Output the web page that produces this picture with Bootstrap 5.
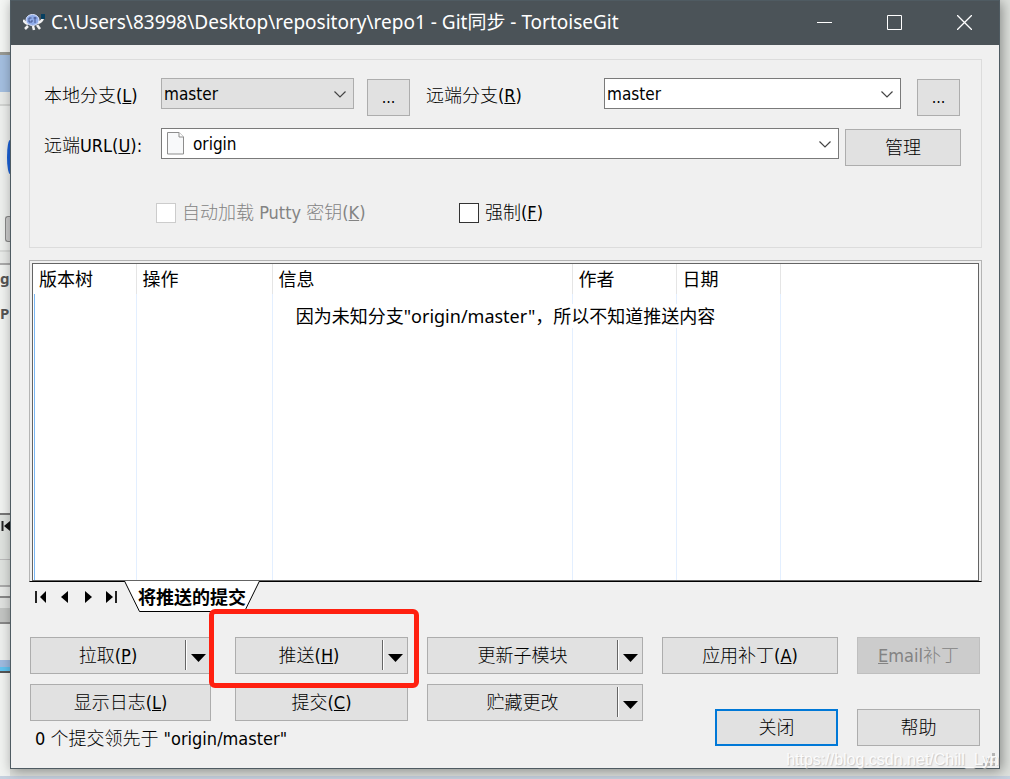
<!DOCTYPE html>
<html lang="zh-CN">
<head>
<meta charset="utf-8">
<meta name="viewport" content="width=device-width, initial-scale=1">
<title>Git同步 - TortoiseGit</title>
<link href="https://cdn.jsdelivr.net/npm/bootstrap@5.3.0/dist/css/bootstrap.min.css" rel="stylesheet">
<style>
  body { background: #dfe2de; font-family: "DejaVu Sans Condensed", "Noto Sans CJK SC", sans-serif; font-size: 17px; line-height: 24px; color: #000; }
  /* desktop and the window behind the dialog */
  .desk { padding-right: 10px; border-bottom: 3px solid #c6d1df; }
  .backdrop {
    width: 10px; font: 700 15px/20px "Noto Sans", sans-serif; color: #555; padding-top: 140px;
    background: linear-gradient(#f4f6f4 0 52px, #999a94 52px 55px, #a4bfe0 55px 92px, #e9ebe9 92px 104px, #d2d4d2 104px 106px, #eef0ee 106px 250px, #d8dad8 250px 252px, #e9ebe9 252px 263px, #aaa 263px 265px, #f1f3f1 265px 513px, #777 513px 515px, #dfe2df 515px 559px, #bbb 559px 560px, #dfe2df 560px 585px, #aaa 585px 587px, #e8eae8 587px 596px, #888 596px 598px, #e0e2e0 598px 608px, #c3c5c3 608px 622px, #888 622px 624px, #eef0ee 624px 660px, #9fbbe0 660px 667px, #62c4f0 667px 671px, #555 671px 673px, #f1f3f1 673px);
  }
  .backdrop .orb { height: 34px; border-radius: 3px 0 0 3px / 17px 0 0 17px; background: #1b62d8; width: 3px; }
  .backdrop .thumb { margin-top: 42px; height: 26px; width: 5px; border: 1px solid #888; border-right: 0; border-radius: 3px 0 0 3px; background: #ccc; }
  .backdrop .t1 { margin-top: 26px; }
  .backdrop .t2 { margin-top: 15px; }
  .backdrop .rewind { margin-top: 197px; display: block; }
  .win { border: 1px solid #4f5b62; background: #f0f0f0; box-shadow: 2px 2px 12px rgba(0,0,0,.4); margin-bottom: 7px; min-width: 0; }
  .titlebar { height: 44px; background: #4b5358; color: #fff; font: 19px/42px "Noto Sans", "Noto Sans CJK SC", sans-serif; padding-left: 12px; }
  .winbtn { width: 70px; height: 42px; background: none; border: 0; padding: 0; color: #fff; line-height: 0; }
  .content { padding: 14px 17px 0 18px; }
  .group { border: 1px solid #dcdcdc; height: 189px; padding: 18px 21px 0 14px; }
  .zh { font-weight: 300; font-size: 18px; }
  .wbtn.zh, .split .zh { font-size: 18px; font-weight: 300; }
  .lab { width: 117px; padding-top: 6px; white-space: nowrap; }
  .lab-remote { width: 178px; }
  .combo { height: 31px; border: 1px solid #7a7a7a; border-radius: 0; padding: 0 30px 0 2px; font-size: 17px; line-height: 24px; color: #000; background-color: #fff; background-position: right 6px center; background-size: 14px 14px; background-image: url("data:image/svg+xml,%3Csvg xmlns='http://www.w3.org/2000/svg' viewBox='0 0 14 14'%3E%3Cpath d='M1.5 4.5L7 10l5.500-5.500' fill='none' stroke='%23444' stroke-width='1.200'/%3E%3C/svg%3E"); }
  .combo-local { width: 193px; background-color: #e1e1e1; border-color: #adadad; }
  .combo-url { padding-left: 31px; }
  .fileicon { left: 6px; top: 4px; }
  .row-gap { margin-top: 12px; }
  .wbtn { height: 37px; border: 1px solid #adadad; border-radius: 0; background: #e1e1e1; padding: 0; color: #000; line-height: 24px; }
  .wbtn:disabled { background: #ccc; border-color: #bfbfbf; color: #838383; opacity: 1; }
  .wbtn-default { border: 2px solid #0078d7; }
  .wbtn-dots { width: 43px; margin-top: 1px; }
  .dots-local { margin-left: 13px; }
  .wbtn-manage { width: 116px; margin: 1px -1px 0 6px; }
  .check { width: 20px; height: 20px; margin: 0; border: 1px solid #333; border-radius: 0; appearance: none; background: #fff; }
  .check:disabled { border-color: #ccc; }
  .checks { padding: 35px 0 0 112px; }
  .check-auto { width: 303px; color: #838383; }
  .check-text { padding-left: 6px; }
  .listframe { margin-top: 12px; border: 1px solid #b4b4b4; border-bottom-color: #000; padding: 2px 2px 0; }
  .listview { border: 1px solid #646464; background: #fff; }
  .commits { table-layout: fixed; width: 100%; height: 316px; font: 18px/24px "Noto Sans", "Noto Sans CJK SC", sans-serif; color: #000; }
  .commits th { height: 30px; padding: 0 0 0 6px; font-weight: 400; border-right: 1px solid #e5e5e5; }
  .commits td { border-right: 1px solid #e3efff; padding: 0; }
  .commits tr > :last-child { border-right: 0; }
  .commits td:first-child { background: linear-gradient(#7ab8f5, #7ab8f5) 1px 0 / 1px 100% no-repeat; }
  .w-graph { width: 103px; }
  .w-short { width: 104px; }
  .w-action { width: 136px; }
  .w-info { width: 300px; }
  .notice { top: 40px; background: #fff; font: 18px/24px "Noto Sans", "Noto Sans CJK SC", sans-serif; white-space: nowrap; }
  .sheets { height: 55px; }
  .tabnav { padding: 6px 0 0; width: 95px; }
  .tabnav button { border: 0; background: none; padding: 0; width: 24px; height: 18px; line-height: 0; }
  .tabnav svg { overflow: visible; }
  .sheet { width: 136px; height: 30px; border: 0; padding: 0 0 0 14px; font: 700 18px/28px "Noto Sans CJK SC", sans-serif; text-align: left; white-space: nowrap; color: #000; background: none; margin-top: -1px; }
  .sheet svg { left: 0; top: 0; }
  .left-grid { display: grid; grid-template-columns: 205fr 192fr 216fr; row-gap: 10px; flex: 613 1 0; padding-left: 1px; align-content: start; }
  .cell-a { padding-right: 24px; }
  .cell-b { padding-right: 19px; }
  .right-col { flex: 318 1 0; margin: 0 2px 0 19px; row-gap: 35px; }
  .right-grid { display: grid; grid-template-columns: 176fr 123fr; column-gap: 19px; }
  .close-cell { padding-left: 53px; }
  .split { height: 37px; border: 1px solid #adadad; background: #e1e1e1; }
  .split button { border: 0; background: none; padding: 0; color: #000; }
  .split .drop { width: 25px; border-left: 1px solid #666; height: 30px; margin-top: 2px; padding-top: 4px; line-height: 0; box-shadow: inset 1px 0 #fff; }
  .callout { left: -26px; right: 8px; top: -28px; height: 79px; border: 5px solid #ff2010; border-radius: 6px; z-index: 3; pointer-events: none; }
  .status { grid-column: 1 / -1; padding: 0 0 0 5px; margin: -4px 0 0; white-space: nowrap; }
  .foot { padding-bottom: 17px; }
  .watermark { right: 0; bottom: -2px; font: 16px/20px "Liberation Sans", sans-serif; color: #fff; text-shadow: 1px 1px 1px #bbb; opacity: .8; }
  .grip { right: 3px; bottom: 2px; }
</style>
</head>
<body>
<div class="desk d-flex">
  <div class="backdrop flex-shrink-0 overflow-hidden" aria-hidden="true">
    <div class="orb ms-auto"></div>
    <div class="thumb ms-auto"></div>
    <div class="t1">g</div>
    <div class="t2">P</div>
    <svg class="rewind" width="10" height="12"><path d="M2.500 1v10" stroke="#222" stroke-width="2"/><path d="M10 1v10L4 6z" fill="#111"/></svg>
  </div>
  <main class="win flex-grow-1 position-relative">
    <header class="titlebar d-flex">
      <svg class="me-1 flex-shrink-0" width="24" height="44" viewBox="0 0 24 44" aria-hidden="true">
        <path d="M0 19q2 3 5 4M5 25l-3 3M10 25l1 4M14 24l3 4M15 22q4-1 5-5" stroke="#f1f1f1" stroke-width="2.500" fill="none"/>
        <ellipse cx="9.500" cy="19" rx="6.500" ry="5.500" fill="#8eabe8" stroke="#dce5ff"/>
        <path d="M8.500 17H6v4h3v-2M12 16v6M10.500 17h3" fill="none" stroke="#43558d"/>
        <path d="M18 13h4v5h-4z" fill="#063f60"/>
      </svg>
      <span class="flex-grow-1 text-nowrap overflow-hidden">C:\Users\83998\Desktop\repository\repo1 - Git同步 - TortoiseGit</span>
      <button class="winbtn flex-shrink-0" aria-label="最小化"><svg width="15" height="15"><path d="M0 7.500h15" stroke="#fff"/></svg></button>
      <button class="winbtn flex-shrink-0" aria-label="最大化"><svg width="15" height="15"><path d="M.5.5h14v14H.5z" fill="none" stroke="#fff"/></svg></button>
      <button class="winbtn flex-shrink-0" aria-label="关闭窗口"><svg width="15" height="15"><path d="M0 0l15 15M15 0L0 15" stroke="#fff" stroke-width="1.300"/></svg></button>
    </header>
    <div class="content">
      <section class="group">
        <div class="d-flex align-items-start">
          <label class="lab zh flex-shrink-0" for="local">本地分支(<u>L</u>)</label>
          <select class="form-select combo combo-local flex-shrink-0" id="local"><option>master</option></select>
          <button class="btn wbtn wbtn-dots dots-local flex-shrink-0">...</button>
          <label class="lab lab-remote zh ms-3 flex-shrink-0" for="remote">远端分支(<u>R</u>)</label>
          <select class="form-select combo flex-grow-1 w-auto" id="remote"><option>master</option></select>
          <button class="btn wbtn wbtn-dots ms-3 flex-shrink-0">...</button>
        </div>
        <div class="d-flex align-items-start row-gap">
          <label class="lab zh flex-shrink-0" for="url">远端URL(<u>U</u>):</label>
          <div class="position-relative flex-grow-1">
            <select class="form-select combo combo-url" id="url"><option>origin</option></select>
            <svg class="fileicon position-absolute" width="17" height="23" aria-hidden="true"><path d="M.5.5H12l4.500 4.500v17H.5z" fill="#f8f9fa" stroke="#8d8d8d"/><path d="M12 .5V5h4.500" fill="#fff" stroke="#8d8d8d"/></svg>
          </div>
          <button class="btn wbtn wbtn-manage zh flex-shrink-0">管理</button>
        </div>
        <div class="d-flex checks">
          <div class="check-auto d-flex align-items-center zh">
            <input class="check flex-shrink-0" type="checkbox" id="putty" disabled>
            <label class="check-text" for="putty">自动加载 Putty 密钥(<u>K</u>)</label>
          </div>
          <div class="d-flex align-items-center zh">
            <input class="check flex-shrink-0" type="checkbox" id="force">
            <label class="check-text" for="force">强制(<u>F</u>)</label>
          </div>
        </div>
      </section>

      <section class="listframe">
        <div class="listview position-relative">
          <table class="commits">
            <thead><tr><th class="w-graph">版本树</th><th class="w-action">操作</th><th class="w-info">信息</th><th class="w-short">作者</th><th class="w-short">日期</th><th></th></tr></thead>
            <tbody><tr><td></td><td></td><td></td><td></td><td></td><td></td></tr></tbody>
          </table>
          <div class="notice position-absolute start-50 translate-middle-x">因为未知分支"origin/master"，所以不知道推送内容</div>
        </div>
      </section>

      <nav class="sheets d-flex">
        <div class="tabnav d-flex flex-shrink-0">
          <button aria-label="第一页"><svg width="12" height="12"><path d="M1 0v12" stroke="#222" stroke-width="2"/><path d="M11 0v12L5 6z"/></svg></button>
          <button aria-label="上一页"><svg width="12" height="12"><path d="M9 0v12L2 6z"/></svg></button>
          <button aria-label="下一页"><svg width="12" height="12"><path d="M3 0v12l7-6z"/></svg></button>
          <button aria-label="最后一页"><svg width="12" height="12"><path d="M10 0v12" stroke="#222" stroke-width="2"/><path d="M0 0v12l7-6z"/></svg></button>
        </div>
        <button class="sheet position-relative"><svg class="position-absolute" width="136" height="31" aria-hidden="true"><path d="M.5 0l15 30.500h105L135.500 0" fill="#fff" stroke="#000"/></svg><span class="position-relative">将推送的提交</span></button>
      </nav>

      <div class="d-flex foot">
        <div class="left-grid">
          <div class="cell-a"><div class="split d-flex"><button class="zh flex-grow-1">拉取(<u>P</u>)</button><button class="drop" aria-label="拉取选项"><svg width="15" height="9"><path d="M0 1h15L7.500 9z"/></svg></button></div></div>
          <div class="cell-b position-relative"><div class="split d-flex"><button class="zh flex-grow-1">推送(<u>H</u>)</button><button class="drop" aria-label="推送选项"><svg width="15" height="9"><path d="M0 1h15L7.500 9z"/></svg></button></div><div class="callout position-absolute"></div></div>
          <div class="split d-flex"><button class="zh flex-grow-1">更新子模块</button><button class="drop" aria-label="子模块选项"><svg width="15" height="9"><path d="M0 1h15L7.500 9z"/></svg></button></div>
          <div class="cell-a"><button class="btn wbtn zh w-100 d-block">显示日志(<u>L</u>)</button></div>
          <div class="cell-b"><button class="btn wbtn zh w-100 d-block">提交(<u>C</u>)</button></div>
          <div class="split d-flex"><button class="zh flex-grow-1">贮藏更改</button><button class="drop" aria-label="贮藏选项"><svg width="15" height="9"><path d="M0 1h15L7.500 9z"/></svg></button></div>
          <p class="status zh">0 个提交领先于 "origin/master"</p>
        </div>
        <div class="right-col d-flex flex-column">
          <div class="right-grid">
            <button class="btn wbtn zh">应用补丁(<u>A</u>)</button>
            <button class="btn wbtn zh" disabled><u>E</u>mail补丁</button>
          </div>
          <div class="right-grid">
            <div class="close-cell"><button class="btn wbtn wbtn-default zh w-100 d-block">关闭</button></div>
            <button class="btn wbtn zh">帮助</button>
          </div>
        </div>
      </div>
    </div>
    <svg class="grip position-absolute" width="13" height="13" aria-hidden="true"><path d="M9 0h3v3H9zM9 5h3v3H9zM9 10h3v3H9zM4 5h3v3H4zM4 10h3v3H4zM-1 10h3v3h-3z" fill="#b5b5b5"/></svg>
    <div class="watermark position-absolute">https://blog.csdn.net/Chill_Lyn</div>
  </main>
</div>
<script src="https://cdn.jsdelivr.net/npm/bootstrap@5.3.0/dist/js/bootstrap.bundle.min.js"></script>
</body>
</html>
